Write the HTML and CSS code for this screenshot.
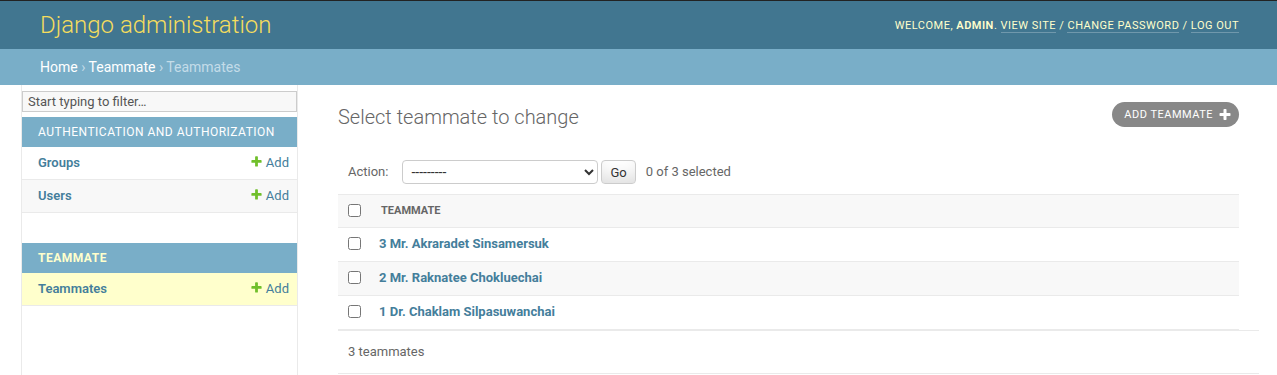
FILE: index.html
```html
<!DOCTYPE html>
<html lang="en">
<head>
<meta charset="UTF-8">
<meta name="viewport" content="width=device-width, initial-scale=1.0">
<title>Select teammate to change | Django site admin</title>
<link rel="stylesheet" href="styles.css">
</head>
<body>

<div class="header">
  <h1 class="site-name"><a href="#">Django administration</a></h1>
  <div class="user-tools">
    Welcome, <strong>admin</strong>.
    <a href="#">View site</a> /
    <a href="#">Change password</a> /
    <a href="#">Log out</a>
  </div>
</div>

<div class="breadcrumbs">
  <a href="#">Home</a> › <a href="#">Teammate</a> › Teammates
</div>

<div class="main">
  <button class="toggle-nav" type="button" aria-label="Toggle navigation"></button>

  <nav class="sidebar">
    <input type="search" class="nav-filter" placeholder="Start typing to filter…">

    <div class="app-module">
      <table>
        <caption><a href="#">Authentication and Authorization</a></caption>
        <tr>
          <th><a href="#">Groups</a></th>
          <td><a href="#" class="addlink"><svg class="plus" width="13" height="13" viewBox="0 0 1792 1792"><path fill="#70bf2b" d="M1600 796v192q0 40-28 68t-68 28h-416v416q0 40-28 68t-68 28h-192q-40 0-68-28t-28-68v-416h-416q-40 0-68-28t-28-68v-192q0-40 28-68t68-28h416v-416q0-40 28-68t68-28h192q40 0 68 28t28 68v416h416q40 0 68 28t28 68z"/></svg>Add</a></td>
        </tr>
        <tr>
          <th><a href="#">Users</a></th>
          <td><a href="#" class="addlink"><svg class="plus" width="13" height="13" viewBox="0 0 1792 1792"><path fill="#70bf2b" d="M1600 796v192q0 40-28 68t-68 28h-416v416q0 40-28 68t-68 28h-192q-40 0-68-28t-28-68v-416h-416q-40 0-68-28t-28-68v-192q0-40 28-68t68-28h416v-416q0-40 28-68t68-28h192q40 0 68 28t28 68v416h416q40 0 68 28t28 68z"/></svg>Add</a></td>
        </tr>
      </table>
    </div>

    <div class="app-module current-app">
      <table>
        <caption><a href="#">Teammate</a></caption>
        <tr class="current-model">
          <th><a href="#">Teammates</a></th>
          <td><a href="#" class="addlink"><svg class="plus" width="13" height="13" viewBox="0 0 1792 1792"><path fill="#70bf2b" d="M1600 796v192q0 40-28 68t-68 28h-416v416q0 40-28 68t-68 28h-192q-40 0-68-28t-28-68v-416h-416q-40 0-68-28t-28-68v-192q0-40 28-68t68-28h416v-416q0-40 28-68t68-28h192q40 0 68 28t28 68v416h416q40 0 68 28t28 68z"/></svg>Add</a></td>
        </tr>
      </table>
    </div>
  </nav>

  <div class="content">
    <div class="content-head">
      <h1>Select teammate to change</h1>
      <a href="#" class="add-btn">Add teammate <svg width="14" height="14" viewBox="0 0 1792 1792"><path fill="#fff" d="M1600 736v192q0 40-28 68t-68 28h-416v416q0 40-28 68t-68 28h-192q-40 0-68-28t-28-68v-416h-416q-40 0-68-28t-28-68v-192q0-40 28-68t68-28h416v-416q0-40 28-68t68-28h192q40 0 68 28t28 68v416h416q40 0 68 28t28 68z"/></svg></a>
    </div>

    <form class="changelist">
      <div class="actions">
        <label for="action">Action:</label>
        <select id="action">
          <option>---------</option>
          <option>Delete selected teammates</option>
        </select>
        <button type="button" class="go">Go</button>
        <span class="action-counter">0 of 3 selected</span>
      </div>

      <table class="results">
        <thead>
          <tr>
            <th class="check"><input type="checkbox"></th>
            <th>Teammate</th>
          </tr>
        </thead>
        <tbody>
          <tr>
            <td class="check"><input type="checkbox"></td>
            <td><a href="#">3 Mr. Akraradet Sinsamersuk</a></td>
          </tr>
          <tr>
            <td class="check"><input type="checkbox"></td>
            <td><a href="#">2 Mr. Raknatee Chokluechai</a></td>
          </tr>
          <tr>
            <td class="check"><input type="checkbox"></td>
            <td><a href="#">1 Dr. Chaklam Silpasuwanchai</a></td>
          </tr>
        </tbody>
      </table>

      <p class="paginator">3 teammates</p>
    </form>
  </div>
</div>

</body>
</html>
```

FILE: styles.css
```css
body {
  margin: 0;
  font-family: Roboto, "Noto Sans", sans-serif;
  font-size: 14px;
  color: #333;
  background: #fff;
}

a {
  color: #447e9b;
  text-decoration: none;
}

/* header */

.header {
  display: flex;
  justify-content: space-between;
  align-items: center;
  height: 28px;
  padding: 10px 38px 10px 40px;
  background: #417690;
  border-top: 1px solid #222;
  color: #ffc;
}

.site-name {
  margin: 0;
  font-size: 24px;
  font-weight: 300;
  line-height: 28px;
}

.site-name a { color: #f5dd5d; }

.user-tools {
  font-size: 11px;
  letter-spacing: 0.5px;
  text-transform: uppercase;
  color: #ffc;
}

.user-tools strong { font-weight: 600; }

.user-tools a {
  color: #ffc;
  border-bottom: 1px solid rgba(255,255,255,0.25);
}

.breadcrumbs {
  padding: 10px 38px 10px 40px;
  background: #79aec8;
  color: #c4dce8;
  font-size: 14px;
  line-height: 16px;
}

.breadcrumbs a { color: #fff; }

/* layout */

.main {
  display: flex;
  min-height: calc(100vh - 85px);
}

.toggle-nav {
  flex: 0 0 22px;
  box-sizing: border-box;
  padding: 0;
  border: 0;
  border-right: 1px solid #eaeaea;
  background: #fff;
}

.sidebar {
  flex: 0 0 275px;
  padding-top: 1px;
  border-right: 1px solid #eaeaea;
}

.nav-filter {
  display: block;
  width: 100%;
  box-sizing: border-box;
  margin: 5px 0;
  padding: 2px 5px;
  border: 1px solid #ccc;
  border-radius: 0;
  background: #f8f8f8;
  font-family: Roboto, "Noto Sans", sans-serif;
  font-size: 13px;
  line-height: 15px;
  color: #333;
  outline: none;
}

.nav-filter::placeholder { color: #555; }

.app-module { margin-bottom: 30px; }

.app-module table {
  width: 100%;
  border-collapse: collapse;
}

.app-module caption {
  text-align: left;
  padding: 8px 8px 8px 16px;
  background: #79aec8;
  font-size: 12px;
  line-height: 14px;
  letter-spacing: 0.5px;
  text-transform: uppercase;
}

.app-module caption a { color: #fff; }

.current-app caption a {
  color: #ffc;
  font-weight: 700;
}

.app-module th,
.app-module td {
  height: 16px;
  padding: 8px;
  font-size: 13px;
  line-height: 16px;
  border-bottom: 1px solid #eaeaea;
}

.app-module th {
  padding-left: 16px;
  text-align: left;
  font-weight: 600;
}

.app-module td {
  text-align: right;
  white-space: nowrap;
}

.app-module tr:nth-child(even) { background: #f8f8f8; }
.app-module tr.current-model { background: #ffc; }

.plus {
  margin-right: 3px;
  vertical-align: -1px;
}

/* content */

.content {
  flex: 1;
  min-width: 0;
  padding: 20px 38px 20px 40px;
}

.content-head {
  display: flex;
  justify-content: space-between;
  align-items: flex-start;
}

.content-head h1 {
  margin: 0 0 20px;
  font-size: 20px;
  font-weight: 300;
  line-height: 24px;
  color: #666;
}

.add-btn {
  display: flex;
  align-items: center;
  margin-top: -3px;
  padding: 3px 7px 3px 12px;
  border-radius: 15px;
  background: #888;
  color: #fff;
  font-size: 11px;
  line-height: 19px;
  letter-spacing: 0.5px;
  text-transform: uppercase;
}

.add-btn svg { margin-left: 5px; }

.actions {
  display: flex;
  align-items: center;
  padding: 11px 10px 10px;
  line-height: 24px;
  font-size: 13px;
  color: #666;
}

.actions select {
  width: 196px;
  height: 24px;
  margin-left: 14px;
  padding: 0 0 0 4px;
  border: 1px solid #ccc;
  border-radius: 4px;
  background: #fff;
  color: #333;
  font-family: Roboto, "Noto Sans", sans-serif;
  font-size: 14px;
}

.go {
  height: 24px;
  margin-left: 3px;
  padding: 4px 8px;
  border: 1px solid #ccc;
  border-radius: 4px;
  background: #fff;
  box-shadow: 0 -15px 20px -10px rgba(0,0,0,0.15) inset;
  color: #333;
  font-family: Roboto, "Noto Sans", sans-serif;
  font-size: 13px;
  line-height: 1;
}

.action-counter { margin-left: 10px; }

.results {
  width: 100%;
  border-collapse: collapse;
}

.results thead th {
  padding: 8px 10px;
  background: #f8f8f8;
  border-top: 1px solid #eaeaea;
  border-bottom: 1px solid #eaeaea;
  color: #666;
  font-size: 11px;
  font-weight: 700;
  line-height: 16px;
  text-align: left;
  text-transform: uppercase;
}

.results thead th.check { padding: 7px 10px 9px; }

.results tbody td {
  padding: 7px 8px 9px;
  border-bottom: 1px solid #eaeaea;
  font-size: 13px;
  line-height: 17px;
}

.results tbody td a { font-weight: 700; }

.results tbody tr:nth-child(even) { background: #f8f8f8; }

.results .check {
  width: 13px;
  padding-left: 10px;
  padding-right: 10px;
}

.results input[type="checkbox"] {
  display: block;
  margin: 0;
}

.paginator {
  width: 100%;
  margin: 0;
  padding: 10px;
  border-top: 1px solid #eaeaea;
  border-bottom: 1px solid #eaeaea;
  color: #666;
  font-size: 13px;
  line-height: 22px;
}
```
